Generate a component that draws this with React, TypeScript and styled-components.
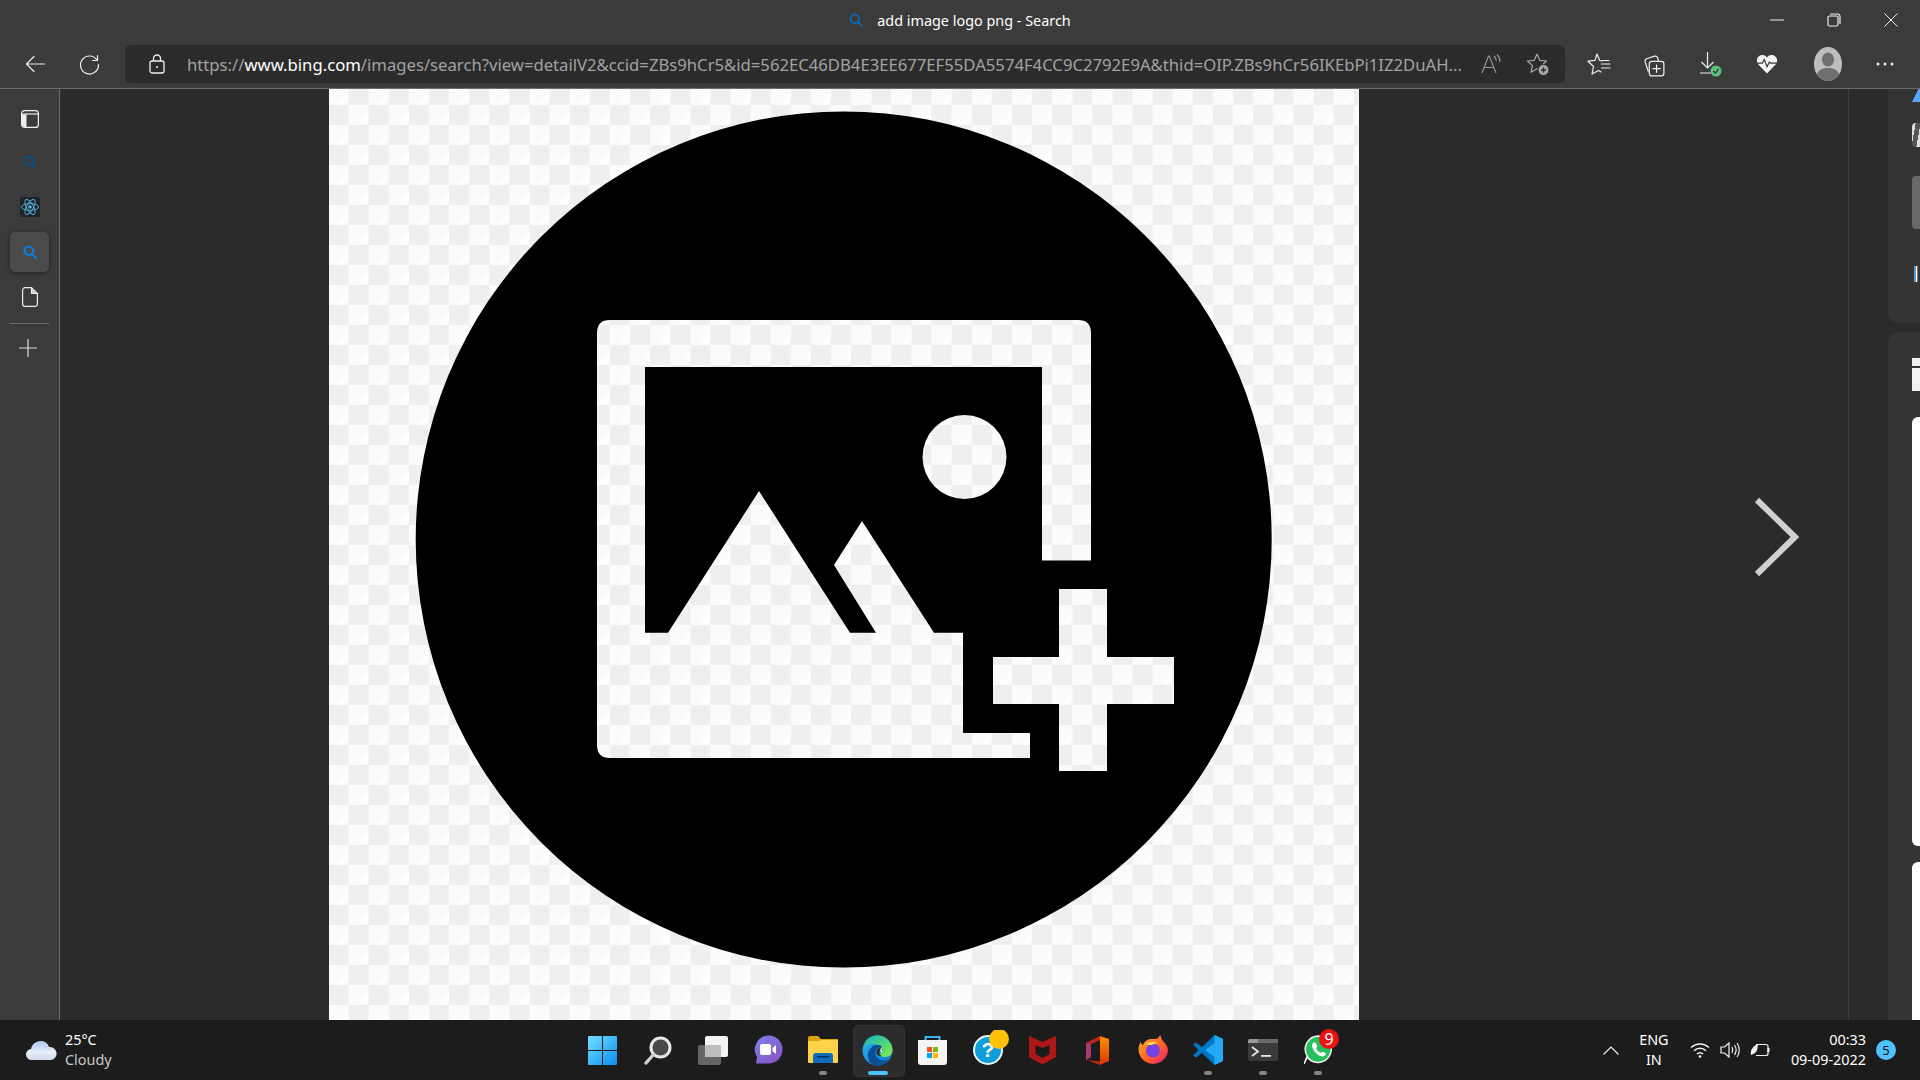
import React from "react";
import styled, { createGlobalStyle } from "styled-components";

const Global = createGlobalStyle`
  html, body { margin: 0; padding: 0; background: #2b2b2b; overflow: hidden; }
  #root { width: 1920px; height: 1080px; }
  * { box-sizing: border-box; }
`;

const Shell = styled.div`
  width: 1920px;
  height: 1080px;
  display: flex;
  flex-direction: column;
  font-family: "Noto Sans", "Open Sans", sans-serif;
  color: #fff;
`;
const Chrome = styled.header`
  height: 89px;
  background: #3b3b3b;
  border-bottom: 1px solid #6b6b6b;
  display: flex;
  flex-direction: column;
`;
const TitleBar = styled.div`
  height: 44px;
  display: grid;
  grid-template-columns: 1fr auto 1fr;
  align-items: start;
`;
const TitleText = styled.div`
  grid-column: 2;
  height: 40px;
  display: flex;
  align-items: center;
  gap: 14px;
  font-size: 14.4px;
`;
const WindowControls = styled.div`
  grid-column: 3;
  justify-self: end;
  display: flex;
  padding-right: 0.5px;
`;
const WindowButton = styled.div`
  width: 57px;
  height: 40px;
  display: flex;
  align-items: center;
  justify-content: center;
`;
const Toolbar = styled.div`
  height: 44px;
  display: flex;
  align-items: flex-start;
  padding: 1px 0 0 7.5px;
`;
const NavButton = styled.div`
  width: 55px;
  height: 38px;
  display: flex;
  align-items: center;
  justify-content: center;
`;
const AddressBar = styled.div`
  width: 1439.5px;
  flex: none;
  height: 38px;
  margin: 0 7px 0 7.5px;
  background: #2b2b2b;
  border-radius: 6px;
  display: flex;
  align-items: center;
  padding: 0 4px 0 22px;
`;
const LockSlot = styled.div`
  width: 20px;
  height: 24px;
  margin-right: 20px;
  display: flex;
  align-items: center;
  justify-content: center;
`;
const Url = styled.div`
  flex: 1;
  min-width: 0;
  font-size: 16.68px;
  color: #a2a2a2;
  white-space: nowrap;
  overflow: hidden;
`;
const Host = styled.span`
  color: #fff;
`;
const AddressTool = styled.div`
  width: 46px;
  height: 30px;
  display: flex;
  align-items: center;
  justify-content: center;
`;
const ToolButton = styled.div<{ $w: number }>`
  width: ${(p) => p.$w}px;
  flex: none;
  height: 38px;
  display: flex;
  align-items: center;
  justify-content: center;
`;
const Main = styled.main`
  flex: 1;
  min-height: 0;
  display: flex;
  background: #2b2b2b;
`;
const Sidebar = styled.nav`
  width: 60px;
  flex: none;
  background: #3b3b3b;
  border-right: 1px solid #6b6b6b;
  padding: 9.5px 10px 0;
  display: flex;
  flex-direction: column;
`;
const SideItem = styled.div<{ $first?: boolean; $active?: boolean }>`
  width: 39px;
  height: ${(p) => (p.$first ? "41px" : p.$active ? "40px" : "45px")};
  margin: ${(p) => (p.$active ? "2.5px 0" : "0")};
  display: flex;
  align-items: center;
  justify-content: center;
  border-radius: 5px;
  background: ${(p) => (p.$active ? "#4a4a4a" : "transparent")};
  box-shadow: ${(p) => (p.$active ? "0 1px 4px rgba(0,0,0,.45)" : "none")};
`;
const SideDivider = styled.div`
  height: 1px;
  margin: 3px 0 2px;
  background: #6b6b6b;
`;
const PlusGlyph = styled.svg`
  display: block;
  margin-right: 3px;
`;
const Stage = styled.section`
  flex: 1;
  min-width: 0;
  display: flex;
  align-items: center;
`;
const Picture = styled.svg`
  display: block;
  flex: none;
  width: 1030px;
  height: 931px;
  margin-left: 269px;
`;
const NextArrow = styled.svg`
  display: block;
  flex: none;
  width: 50px;
  height: 86px;
  margin-left: auto;
  margin-right: 47px;
  margin-bottom: 35px;
`;
const RightColumn = styled.aside`
  width: 72px;
  flex: none;
  display: flex;
  background: #2b2b2b;
  border-left: 1px solid #3a3a3a;
  padding-left: 39px;
`;
const PanelStack = styled.div`
  flex: 1;
  display: flex;
  flex-direction: column;
  gap: 9px;
`;
const Panel = styled.div<{ $grow?: boolean }>`
  flex: ${(p) => (p.$grow ? 1 : "none")};
  height: ${(p) => (p.$grow ? "auto" : "234px")};
  min-height: 0;
  background: #343434;
  padding-left: 24px;
  display: flex;
  flex-direction: column;
  overflow: hidden;
  border-radius: ${(p) => (p.$grow ? "10px 0 0 0" : "0 0 0 10px")};
`;
const Fragment = styled.div<{ $h: number; $mt: number; $bg: string; $radius?: string; $w?: number }>`
  flex: none;
  height: ${(p) => p.$h}px;
  width: ${(p) => (p.$w ? `${p.$w}px` : "auto")};
  margin-top: ${(p) => p.$mt}px;
  background: ${(p) => p.$bg};
  border-radius: ${(p) => p.$radius ?? "0"};
`;
const Taskbar = styled.footer`
  height: 60px;
  flex: none;
  background: #1c1c1c;
  display: grid;
  grid-template-columns: 1fr auto 1fr;
  align-items: center;
`;
const Weather = styled.div`
  display: flex;
  align-items: center;
  padding-left: 26px;
  gap: 8px;
`;
const WeatherText = styled.div`
  font-size: 14.4px;
  line-height: 20px;
  color: #fff;
`;
const Muted = styled.div`
  color: #c8c8c8;
`;
const TaskIcons = styled.div`
  display: flex;
  height: 60px;
`;
const TaskIcon = styled.div<{ $active?: boolean }>`
  width: 55px;
  height: 60px;
  position: relative;
  display: flex;
  align-items: center;
  justify-content: center;
  &::before {
    content: "";
    display: ${(p) => (p.$active ? "block" : "none")};
    position: absolute;
    left: 2.5px;
    top: 5px;
    width: 50px;
    height: 50px;
    background: #2c2c2c;
    border: 1px solid #333;
    border-radius: 5px;
  }
  & > svg {
    position: relative;
    display: block;
  }
`;
const Indicator = styled.span<{ $active?: boolean }>`
  position: absolute;
  left: 50%;
  bottom: 5px;
  height: 4px;
  width: ${(p) => (p.$active ? 20 : 8)}px;
  margin-left: ${(p) => (p.$active ? -10 : -4)}px;
  border-radius: 2px;
  background: ${(p) => (p.$active ? "#4cc2ff" : "#858585")};
`;
const CountBadge = styled.span<{ $bg: string }>`
  position: absolute;
  left: 29px;
  top: 9px;
  width: 20px;
  height: 20px;
  border-radius: 50%;
  background: ${(p) => p.$bg};
  color: #fff;
  font-size: 16px;
  line-height: 20px;
  text-align: center;
`;
const Tray = styled.div`
  justify-self: end;
  display: flex;
  align-items: center;
  height: 60px;
`;
const TrayChevron = styled.div`
  margin-right: 19px;
  display: flex;
`;
const Lang = styled.div`
  width: 32px;
  font-size: 14.4px;
  line-height: 20px;
  text-align: center;
  margin-right: 20px;
`;
const TrayIcons = styled.div`
  display: flex;
  gap: 10px;
  margin-right: 21px;
`;
const Clock = styled.div`
  font-size: 14.4px;
  line-height: 20px;
  text-align: right;
  margin-right: 10px;
`;
const Notify = styled.div`
  width: 20px;
  height: 20px;
  border-radius: 50%;
  background: #4cc2ff;
  color: #111;
  font-size: 13px;
  line-height: 20px;
  text-align: center;
  margin-right: 24px;
`;

const MagnifierIcon = ({ color, w = 2, size = 14 }: { color: string; w?: number; size?: number }) => (
  <svg width={size} height={size} viewBox="0 0 14 14" fill="none" stroke={color} strokeWidth={w}>
    <circle cx="5.8" cy="5.8" r="4.3" />
    <path d="M9 9l4.2 4.2" strokeLinecap="round" />
  </svg>
);

const LineIcon = ({ children, size = 24, box = 24 }: { children: React.ReactNode; size?: number; box?: number }) => (
  <svg width={size} height={size} viewBox={`0 0 ${box} ${box}`} fill="none" stroke="#eee" strokeWidth="1.2" strokeLinecap="round" strokeLinejoin="round">
    {children}
  </svg>
);

const WindowsLogo = () => (
  <svg width="29" height="29" viewBox="0 0 29 29">
    <defs>
      <linearGradient id="win" x1="0" y1="0" x2="1" y2="1">
        <stop offset="0" stopColor="#6fe0ff" />
        <stop offset="1" stopColor="#0f8cf0" />
      </linearGradient>
    </defs>
    <path d="M1 0h13v14H0V1a1 1 0 011-1zM15 0h13a1 1 0 011 1v13H15zM0 15h14v14H1a1 1 0 01-1-1zM15 15h14v13a1 1 0 01-1 1H15z" fill="url(#win)" />
  </svg>
);
const SearchLogo = () => (
  <svg width="28" height="29" viewBox="0 0 28 29">
    <circle cx="16.5" cy="11.5" r="9.5" fill="#4a4a4a" stroke="#e8e8e8" strokeWidth="3" />
    <path d="M9.5 18.5L2 27" stroke="#cfcfcf" strokeWidth="3.4" strokeLinecap="round" />
  </svg>
);
const TaskViewLogo = () => (
  <svg width="30" height="29" viewBox="0 0 30 29">
    <rect x="7" y="0" width="23" height="21" rx="2" fill="#f3f3f3" />
    <rect x="0" y="9" width="23" height="20" rx="2" fill="#6a6a6a" fillOpacity=".95" />
    <rect x="7" y="9" width="16" height="12" fill="#bdbdbd" />
  </svg>
);
const ChatLogo = () => (
  <svg width="30" height="30" viewBox="0 0 30 30">
    <defs>
      <linearGradient id="chat" x1="0" y1="0" x2="1" y2="1">
        <stop offset="0" stopColor="#7b83eb" />
        <stop offset="1" stopColor="#8a4fc0" />
      </linearGradient>
    </defs>
    <path d="M15.5 0.5a14 14 0 110 28H3l1-6.5A14 14 0 0115.5.5z" fill="url(#chat)" />
    <rect x="7" y="9" width="11" height="11" rx="2" fill="#fff" />
    <path d="M19.5 13l3.5-3v9l-3.5-3z" fill="#fff" />
  </svg>
);
const FolderLogo = () => (
  <svg width="30" height="28" viewBox="0 0 30 28">
    <path d="M0 2a2 2 0 012-2h8l3 3h17v22H0z" fill="#dfa20a" />
    <path d="M0 5h11l2-1h17v22a1 1 0 01-1 1H1a1 1 0 01-1-1z" fill="#fdd34c" />
    <path d="M5 20a3 3 0 013-3h14a3 3 0 013 3v7H5z" fill="#0f6cbd" />
    <rect x="9" y="20" width="12" height="1.5" fill="#052f5c" />
  </svg>
);
const EdgeLogo = () => (
  <svg width="31" height="31" viewBox="0 0 31 31">
    <defs>
      <linearGradient id="edgeB" x1="0" y1="0" x2="1" y2="1">
        <stop offset="0" stopColor="#2fb5e8" />
        <stop offset="1" stopColor="#0a78d0" />
      </linearGradient>
      <linearGradient id="edgeG" x1="0" y1="0" x2="1" y2="1">
        <stop offset="0" stopColor="#1eb4c8" />
        <stop offset=".6" stopColor="#50d96f" />
        <stop offset="1" stopColor="#8fe84f" />
      </linearGradient>
    </defs>
    <circle cx="15.5" cy="15.5" r="15" fill="url(#edgeB)" />
    <path d="M3 7C7 1 14-1 21 1.5c6 2.500 9.500 8 9.500 13.500 0 4-3 7-7.500 7-3 0-5-1-5.500-2.500 3-1 3.500-5.500.5-8C12 7 5 8 3 13z" fill="url(#edgeG)" />
    <path d="M9 13c3-4 9-4 11-1-5 0-8 4-6 9 2 4 8 6 14 3-3 4-7 6.500-12 6.500-3 0-6-1-8-3-3-5-3-11 1-14.500z" fill="#0b4f96" />
    <path d="M20 12c-3 .2-5 2-5.500 4.500-.5 2 .5 4 2.500 4.500 1 .3 2 .3 2.500-.5-2-.5-2.500-2-2-3.500.5-2 2-3 3.500-2.500z" fill="#2c2c2c" />
    <path d="M20.500 12.500c-1.500 1-2 3-1 5" fill="none" stroke="#f2f7f4" strokeWidth="1.200" />
  </svg>
);
const StoreLogo = () => (
  <svg width="29" height="31" viewBox="0 0 29 31">
    <path d="M7.500 7V2h14v5" fill="none" stroke="#3ab5ee" strokeWidth="2" />
    <path d="M0 5h29v22a3 3 0 01-3 3H3a3 3 0 01-3-3z" fill="#f5f5f5" />
    <rect x="9" y="12" width="5" height="5" fill="#f25022" />
    <rect x="15" y="12" width="5" height="5" fill="#7fba00" />
    <rect x="9" y="18" width="5" height="5" fill="#00a4ef" />
    <rect x="15" y="18" width="5" height="5" fill="#ffb900" />
  </svg>
);
const HelpLogo = () => (
  <svg width="44" height="40" viewBox="0 0 44 40">
    <circle cx="22" cy="20" r="14" fill="#109ddb" stroke="#e9f4f8" strokeWidth="2" />
    <text x="22" y="27" textAnchor="middle" fontFamily="Liberation Sans, sans-serif" fontWeight="700" fontSize="21" fill="#fff">?</text>
    <circle cx="33" cy="9" r="10" fill="#ffc107" />
  </svg>
);
const McAfeeLogo = () => (
  <svg width="27" height="30" viewBox="0 0 27 30">
    <path fillRule="evenodd" d="M0 1l13.500 6L27 1v21l-13.500 7.500L0 22zM6.500 10v9l7 4 7-4v-9l-7 3z" fill="#c01818" fillOpacity=".9" />
  </svg>
);
const OfficeLogo = () => (
  <svg width="23" height="29" viewBox="0 0 23 29">
    <defs>
      <linearGradient id="off" x1="0" y1="0" x2="0" y2="1">
        <stop offset="0" stopColor="#ff8f00" />
        <stop offset="1" stopColor="#d83b01" />
      </linearGradient>
    </defs>
    <path d="M0 7l14-7 9 3v22l-9 4-13-5 13 1.500V4L5 8v13l-5 3z" fill="#c4241c" />
    <path d="M14 .5l9 2.500v22l-9 3z" fill="url(#off)" />
    <path d="M0 7.500L5 8v13l-5 3z" fill="#a43b72" />
  </svg>
);
const FirefoxLogo = () => (
  <svg width="30" height="30" viewBox="0 0 30 30">
    <defs>
      <linearGradient id="ff" x1="0" y1="0" x2="1" y2="1">
        <stop offset="0" stopColor="#ffb01f" />
        <stop offset=".6" stopColor="#ff5a2c" />
        <stop offset="1" stopColor="#e31587" />
      </linearGradient>
    </defs>
    <path d="M22 0c2 3 1 4 3 6 3 3 5 6 5 9.500A14.800 14.800 0 011 18C0 13 1 9 3 7c0 2 1 3 2 3 1-3 3-5 7-6 4 0 8 1 10-4z" fill="url(#ff)" />
    <circle cx="15" cy="15.500" r="7" fill="#7542e5" />
    <path d="M8 9c4-3 9-3 13 0-3-1-5 0-7 1-3 0-5 0-6-1z" fill="#ffd84d" />
  </svg>
);
const VSCodeLogo = () => (
  <svg width="30" height="30" viewBox="0 0 30 30">
    <path d="M21.500 0L30 4v22l-8.500 4L9 18l-6 4.500L0 20.500l5.500-5.500L0 9.500 3 7.500 9 12z" fill="#0078c8" />
    <path d="M21.500 0L30 4v22l-8.500 4zM21.500 8L12 15l9.500 7z" fill="#23a8f2" fillRule="evenodd" />
  </svg>
);
const TerminalLogo = () => (
  <svg width="30" height="22" viewBox="0 0 30 22">
    <rect width="30" height="22" rx="2" fill="#3a3a3a" />
    <path d="M2 0h26a2 2 0 012 2v2H0V2a2 2 0 012-2z" fill="#9a9a9a" />
    <rect x="10" y="0" width="20" height="4" fill="#6a6a6a" />
    <path d="M4 8l6 4.500-6 4.500" fill="none" stroke="#e6e6e6" strokeWidth="1.800" />
    <rect x="13" y="16" width="10" height="1.800" fill="#e6e6e6" />
  </svg>
);
const WhatsAppLogo = () => (
  <svg width="28" height="30" viewBox="0 0 28 30">
    <path d="M14.500 1A13.200 13.200 0 113 21.500L0 29l3.500-7.500A13.200 13.200 0 0114.500 1z" fill="#25c05d" stroke="#f2f2f2" strokeWidth="1.500" />
    <path d="M9.500 7.500c-2 1.500-2 4 0 7.500s6 6.500 9 6.500c2 0 3.500-1.500 3.500-3l-3.500-2-1.500 1.500c-2-.5-4-2.500-5-5l1.500-1.500L11.500 7.500z" fill="#fff" />
  </svg>
);
const CloudLogo = () => (
  <svg width="31" height="21" viewBox="0 0 31 21">
    <defs>
      <linearGradient id="cloud" x1="0" y1="0" x2="0" y2="1">
        <stop offset="0" stopColor="#a9c9ef" />
        <stop offset=".6" stopColor="#e7eef7" />
        <stop offset="1" stopColor="#cfdbe9" />
      </linearGradient>
    </defs>
    <path d="M6 20a5.500 5.500 0 01-1-11c1-5 5-8 10-8 4 0 7 2.500 8 6a6.500 6.500 0 012 13z" fill="url(#cloud)" />
  </svg>
);

const holes =
  "M610,320 H1078 Q1091,320 1091,333 V560.5 H1042 V367 H645 V632.700 H668 L759,491 L850,632.700 H876 L834,565 L862,521 L934,632.700 H963 V733 H1030 V758 H610 Q597,758 597,745 V333 Q597,320 610,320 Z " +
  "M1059,589 H1107 V657 H1174 V704 H1107 V771 H1059 V704 H993 V657 H1059 Z";

const bigCircle = "M415.700,539.400 a428,428 0 1,0 856,0 a428,428 0 1,0 -856,0 Z ";
const sunHole = "M922.500,457 a42,42 0 1,0 84,0 a42,42 0 1,0 -84,0 Z ";

const url = "/images/search?view=detailV2&ccid=ZBs9hCr5&id=562EC46DB4E3EE677EF55DA5574F4CC9C2792E9A&thid=OIP.ZBs9hCr56IKEbPi1IZ2DuAH...";

export default function App() {
  return (
    <Shell>
      <Global />
      <Chrome>
        <TitleBar>
          <TitleText>
            <MagnifierIcon color="#0a6fc2" w={1.6} />
            <span>add image logo png - Search</span>
          </TitleText>
          <WindowControls>
            <WindowButton>
              <svg width="14" height="14" viewBox="0 0 14 14"><path d="M0 7h14" stroke="#eee" /></svg>
            </WindowButton>
            <WindowButton>
              <LineIcon size={14} box={14}>
                <rect x="1" y="3" width="10" height="10" rx="1.500" />
                <path d="M3.500 1h7a2.500 2.500 0 012.500 2.500v7" />
              </LineIcon>
            </WindowButton>
            <WindowButton>
              <svg width="14" height="14" viewBox="0 0 14 14"><path d="M0.500 0.500l13 13M13.500 0.500l-13 13" stroke="#eee" /></svg>
            </WindowButton>
          </WindowControls>
        </TitleBar>
        <Toolbar>
          <NavButton>
            <LineIcon>
              <path d="M3.500 12h18M11 4.500L3.500 12l7.500 7.500" />
            </LineIcon>
          </NavButton>
          <NavButton>
            <LineIcon>
              <path d="M19.500 3.500v5h-5" />
              <path d="M19 8A9 9 0 1020.500 12.500" />
            </LineIcon>
          </NavButton>
          <AddressBar>
            <LockSlot>
              <svg width="16" height="20" viewBox="0 0 16 20" fill="none" stroke="#f0f0f0" strokeWidth="1.300">
                <rect x="1" y="7" width="14" height="12" rx="2" />
                <path d="M4.500 7V4.500a3.500 3.500 0 017 0V7" />
                <circle cx="8" cy="13" r="1" fill="#f0f0f0" stroke="none" />
              </svg>
            </LockSlot>
            <Url>
              https://<Host>www.bing.com</Host>
              {url}
            </Url>
            <AddressTool>
              <svg width="22" height="20" viewBox="0 0 22 20" fill="none" stroke="#9a9a9a" strokeWidth="1.100">
                <path d="M1 19L7.500 2h.8L15 19M3.500 13.500h9" />
                <path d="M13 2c1.500 1.500 2.200 3 2.200 5M16 .5c2 2 3 4.500 3 7.500" />
              </svg>
            </AddressTool>
            <AddressTool>
              <svg width="24" height="24" viewBox="0 0 24 24" fill="none" stroke="#a8a8a8" strokeWidth="1.200" strokeLinejoin="round">
                <path d="M11 2l2.800 6.300 6.800.7-5.100 4.600 1.500 6.700-6-3.500-6 3.500 1.500-6.700L1.400 9l6.800-.7z" />
                <circle cx="17.500" cy="18" r="5.500" fill="#a8a8a8" stroke="#2b2b2b" strokeWidth="1" />
                <path d="M15 18h5M17.500 15.500v5" stroke="#2b2b2b" strokeWidth="1.300" />
              </svg>
            </AddressTool>
          </AddressBar>
          <ToolButton $w={55}>
            <LineIcon>
              <path d="M10 2l2.700 6.500 2.300.3M5 22l1.500-7.500L1 9.200l7-.8L10 2M5 22l6.500-3.500L14 20M14.500 12H23M14.500 16H23M15 8.500h7" />
            </LineIcon>
          </ToolButton>
          <ToolButton $w={55}>
            <svg width="25" height="25" viewBox="0 0 24 24" fill="none" stroke="#eee" strokeWidth="1.200" strokeLinecap="round" strokeLinejoin="round">
              <path d="M6 18.500l-3-9c-.4-1.500.2-2.500 1.500-3L12 4c1.500-.4 2.500.2 3 1.500L16 9" />
              <rect x="7" y="9" width="14" height="14" rx="2.500" />
              <path d="M14 12.500v7M10.500 16h7" />
            </svg>
          </ToolButton>
          <ToolButton $w={59}>
            <svg width="24" height="26" viewBox="0 0 24 26" fill="none" stroke="#eee" strokeWidth="1.200">
              <path d="M8.500 1v16M2.500 11l6 6 6-6M1 22h11" />
              <circle cx="17" cy="20" r="5.500" fill="#5fbf7e" stroke="none" />
              <path d="M14.500 20l2 2 3-4" stroke="#1f2f25" strokeWidth="1.200" />
            </svg>
          </ToolButton>
          <ToolButton $w={53}>
            <svg width="22" height="20" viewBox="0 0 24 22">
              <path d="M12 21.500L2 11C-1 6.500 2 1 7 1c2.500 0 4 1 5 3 1-2 2.500-3 5-3 5 0 8 5.500 5 10z" fill="#f4f4f4" />
              <path d="M1 10h6l2-4 3 8 2.500-5 1.500 1h7" fill="none" stroke="#3b3b3b" strokeWidth="1.300" />
            </svg>
          </ToolButton>
          <ToolButton $w={69}>
            <svg width="28" height="34" viewBox="0 0 28 34">
              <ellipse cx="14" cy="17" rx="14" ry="17" fill="#bdbdbd" />
              <ellipse cx="14" cy="12.500" rx="6" ry="7" fill="#6e6e6e" />
              <path d="M3 28c1-5 5-7 11-7s10 2 11 7c-3 4-7 6-11 6s-8-2-11-6z" fill="#6e6e6e" />
            </svg>
          </ToolButton>
          <ToolButton $w={45}>
            <svg width="18" height="4" viewBox="0 0 18 4" fill="#eee">
              <circle cx="2" cy="2" r="1.500" />
              <circle cx="9" cy="2" r="1.500" />
              <circle cx="16" cy="2" r="1.500" />
            </svg>
          </ToolButton>
        </Toolbar>
      </Chrome>
      <Main>
        <Sidebar>
          <SideItem $first>
            <svg width="18" height="18" viewBox="0 0 18 18" fill="none" stroke="#eee" strokeWidth="1.200">
              <rect x=".6" y=".6" width="16.800" height="16.800" rx="3" />
              <path d="M.6 4h16.800" />
              <path d="M1 4.500h4.500V17H4a3 3 0 01-3-3z" fill="#eee" stroke="none" />
            </svg>
          </SideItem>
          <SideItem>
            <MagnifierIcon color="#0c4f84" />
          </SideItem>
          <SideItem>
            <svg width="20" height="20" viewBox="0 0 20 20" fill="none" stroke="#4fb4d8" strokeWidth=".9">
              <rect width="20" height="20" rx="2" fill="#20232a" stroke="none" />
              <circle cx="10" cy="10" r="1.800" fill="#4fb4d8" stroke="none" />
              <ellipse cx="10" cy="10" rx="8.500" ry="3.400" />
              <ellipse cx="10" cy="10" rx="8.500" ry="3.400" transform="rotate(60 10 10)" />
              <ellipse cx="10" cy="10" rx="8.500" ry="3.400" transform="rotate(120 10 10)" />
            </svg>
          </SideItem>
          <SideItem $active>
            <MagnifierIcon color="#0d7fe0" />
          </SideItem>
          <SideItem>
            <svg width="16" height="20" viewBox="0 0 16 20" fill="none" stroke="#eee" strokeWidth="1.200" strokeLinejoin="round">
              <path d="M3 .6h6.500L15.400 6.500V17a2.400 2.400 0 01-2.400 2.400H3A2.400 2.400 0 01.6 17V3A2.400 2.400 0 013 .6z" />
              <path d="M9.500.6V6.500h5.900" fill="#ccc" />
            </svg>
          </SideItem>
          <SideDivider />
          <SideItem>
            <PlusGlyph width="18" height="18" viewBox="0 0 18 18" stroke="#ddd" strokeWidth="1.200">
              <path d="M0 9h18M9 0v18" />
            </PlusGlyph>
          </SideItem>
        </Sidebar>
        <Stage>
          <Picture viewBox="329 89 1030 931" preserveAspectRatio="none">
            <defs>
              <pattern id="checker" x="328.500" y="85" width="40.200" height="40" patternUnits="userSpaceOnUse">
                <rect width="40.200" height="40" fill="#fbfbfb" />
                <rect x="20.100" y="0" width="20.100" height="20" fill="#efefef" />
                <rect x="0" y="20" width="20.100" height="20" fill="#efefef" />
                <path d="M8 20L20.100 7V14L14 20ZM28 40L40.200 27V34L34 40Z" fill="#fff" />
              </pattern>
            </defs>
            <rect x="329" y="89" width="1030" height="931" fill="url(#checker)" />
            <path d={bigCircle + sunHole + holes} fill="#000" fillRule="evenodd" />
          </Picture>
          <NextArrow viewBox="0 0 50 86" fill="none" stroke="#d0d0d0" strokeWidth="6">
            <path d="M6 6l38 37L6 80" />
          </NextArrow>
        </Stage>
        <RightColumn>
          <PanelStack>
            <Panel>
              <Fragment $h={13} $mt={0} $bg="linear-gradient(115deg, transparent 45%, #58a6f5 45%)" />
              <Fragment $h={24} $mt={21} $bg="linear-gradient(100deg, #dcdcdc 30%, #555 30%, #555 70%, #ddd 70%)" $radius="4px 0 0 4px" />
              <Fragment $h={53} $mt={29} $bg="#686868" $radius="4px 0 0 4px" />
              <Fragment $h={16} $mt={37} $bg="linear-gradient(90deg, transparent 35%, #4a9fe0 35%, #4a9fe0 60%, #fff 60%, #fff 80%, #a86a50 80%)" $w={6} />
            </Panel>
            <Panel $grow>
              <Fragment $h={8} $mt={26} $bg="#f2f2f2" />
              <Fragment $h={23} $mt={2} $bg="#f2f2f2" />
              <Fragment $h={429} $mt={26} $bg="#ffffff" $radius="6px 0 0 6px" />
              <Fragment $h={200} $mt={16} $bg="#ffffff" $radius="6px 0 0 0" />
            </Panel>
          </PanelStack>
        </RightColumn>
      </Main>
      <Taskbar>
        <Weather>
          <CloudLogo />
          <WeatherText>
            25°C
            <Muted>Cloudy</Muted>
          </WeatherText>
        </Weather>
        <TaskIcons>
          <TaskIcon><WindowsLogo /></TaskIcon>
          <TaskIcon><SearchLogo /></TaskIcon>
          <TaskIcon><TaskViewLogo /></TaskIcon>
          <TaskIcon><ChatLogo /></TaskIcon>
          <TaskIcon><FolderLogo /><Indicator /></TaskIcon>
          <TaskIcon $active><EdgeLogo /><Indicator $active /></TaskIcon>
          <TaskIcon><StoreLogo /></TaskIcon>
          <TaskIcon><HelpLogo /></TaskIcon>
          <TaskIcon><McAfeeLogo /></TaskIcon>
          <TaskIcon><OfficeLogo /></TaskIcon>
          <TaskIcon><FirefoxLogo /></TaskIcon>
          <TaskIcon><VSCodeLogo /><Indicator /></TaskIcon>
          <TaskIcon><TerminalLogo /><Indicator /></TaskIcon>
          <TaskIcon><WhatsAppLogo /><CountBadge $bg="#ee1111">9</CountBadge><Indicator /></TaskIcon>
        </TaskIcons>
        <Tray>
          <TrayChevron>
            <svg width="16" height="9" viewBox="0 0 16 9" fill="none" stroke="#eee" strokeWidth="1.200"><path d="M.5 8.500L8 1l7.500 7.500" /></svg>
          </TrayChevron>
          <Lang>ENG<br />IN</Lang>
          <TrayIcons>
            <svg width="20" height="16" viewBox="0 0 20 16" fill="none" stroke="#f2f2f2" strokeWidth="1.500">
              <path d="M1 5.500a13 13 0 0118 0M4 8.800a8.500 8.500 0 0112 0M7 12a4 4 0 016 0" />
              <circle cx="10" cy="14.500" r="1.300" fill="#f2f2f2" stroke="none" />
            </svg>
            <svg width="20" height="16" viewBox="0 0 20 16" fill="none" stroke="#f2f2f2" strokeWidth="1.200">
              <path d="M1 5h3.500L9 1v14l-4.500-4H1z" />
              <path d="M12 5c1 2 1 4 0 6M14.500 3c2 3 2 7 0 10M17 1c3 4 3 10 0 14" />
            </svg>
            <svg width="20" height="16" viewBox="0 0 20 16" fill="none" stroke="#f2f2f2" strokeWidth="1.200">
              <path d="M6 2.500h10a2 2 0 012 2v7a2 2 0 01-2 2H6" />
              <path d="M18.500 6v4" strokeWidth="2" />
              <path d="M1 13c-1-5 2-9 7-11-.5 4 0 9-7 11z" fill="#f2f2f2" stroke="none" />
            </svg>
          </TrayIcons>
          <Clock>00:33<br />09-09-2022</Clock>
          <Notify>5</Notify>
        </Tray>
      </Taskbar>
    </Shell>
  );
}
